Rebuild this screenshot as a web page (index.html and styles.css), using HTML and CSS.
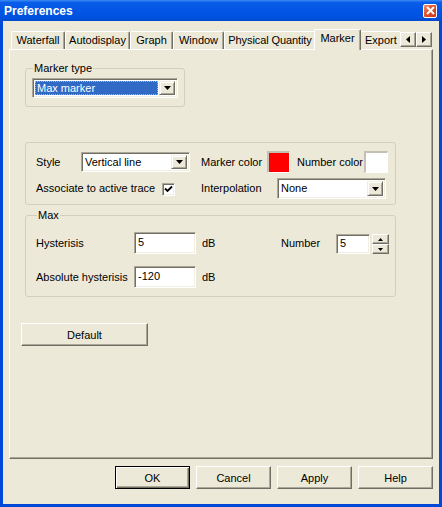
FILE: index.html
```html
<!DOCTYPE html>
<html>
<head>
<meta charset="utf-8">
<title>Preferences</title>
<link rel="stylesheet" href="styles.css">
</head>
<body>
<div class="window">
  <div class="titlebar">
    <span class="title">Preferences</span>
    <span class="close"><svg width="9" height="9" viewBox="0 0 9 9"><path d="M1 1 L8 8 M8 1 L1 8" stroke="#fff" stroke-width="2"/></svg></span>
  </div>
  <div class="frame">
    <div class="tabstrip">
      <div class="tabs">
        <div class="tab t-waterfall">Waterfall</div>
        <div class="tab t-auto">Autodisplay</div>
        <div class="tab t-graph">Graph</div>
        <div class="tab t-window">Window</div>
        <div class="tab t-phys">Physical Quantity</div>
        <div class="tab active t-marker">Marker</div>
        <div class="tab t-export">Export</div>
      </div>
      <div class="scroller">
        <span class="sbtn"><svg width="4" height="7" viewBox="0 0 4 7"><path d="M4 0 L0 3.5 L4 7 Z" fill="#000"/></svg></span>
        <span class="sbtn"><svg width="4" height="7" viewBox="0 0 4 7"><path d="M0 0 L4 3.5 L0 7 Z" fill="#000"/></svg></span>
      </div>
    </div>
    <div class="panel">
      <fieldset class="group g-type">
        <legend>Marker type</legend>
        <div class="combo c-type">
          <span class="combo-text selected"><span class="focus">Max marker</span></span>
          <span class="drop"><svg width="7" height="4" viewBox="0 0 7 4"><path d="M0 0 H7 L3.5 4 Z" fill="#000"/></svg></span>
        </div>
      </fieldset>

      <div class="group g-style">
        <div class="row">
          <span class="lbl w-style">Style</span>
          <div class="combo c-style">
            <span class="combo-text">Vertical line</span>
            <span class="drop"><svg width="7" height="4" viewBox="0 0 7 4"><path d="M0 0 H7 L3.5 4 Z" fill="#000"/></svg></span>
          </div>
          <span class="lbl w-mcolor">Marker color</span>
          <span class="swatch red"></span>
          <span class="lbl w-ncolor">Number color</span>
          <span class="swatch white"></span>
        </div>
        <div class="row row2">
          <span class="lbl w-assoc">Associate to active trace</span>
          <span class="check"><svg width="9" height="9" viewBox="0 0 9 9"><path d="M1 3.5 L3.5 6 L8 1.5" stroke="#000" stroke-width="1.8" fill="none"/></svg></span>
          <span class="lbl w-interp">Interpolation</span>
          <div class="combo c-interp">
            <span class="combo-text">None</span>
            <span class="drop"><svg width="7" height="4" viewBox="0 0 7 4"><path d="M0 0 H7 L3.5 4 Z" fill="#000"/></svg></span>
          </div>
        </div>
      </div>

      <fieldset class="group g-max">
        <legend>Max</legend>
        <div class="row">
          <span class="lbl w-hyst">Hysterisis</span>
          <span class="field f-db">5</span>
          <span class="lbl w-db">dB</span>
          <span class="lbl w-num">Number</span>
          <span class="field f-num">5</span>
          <span class="spin">
            <span class="sp"><svg width="5" height="3" viewBox="0 0 5 3"><path d="M2.5 0 L5 3 H0 Z" fill="#000"/></svg></span>
            <span class="sp"><svg width="5" height="3" viewBox="0 0 5 3"><path d="M0 0 H5 L2.5 3 Z" fill="#000"/></svg></span>
          </span>
        </div>
        <div class="row row-abs">
          <span class="lbl w-hyst">Absolute hysterisis</span>
          <span class="field f-db">-120</span>
          <span class="lbl w-db">dB</span>
        </div>
      </fieldset>

      <button class="btn b-default">Default</button>
    </div>
    <div class="actions">
      <button class="btn b-act b-ok">OK</button>
      <button class="btn b-act">Cancel</button>
      <button class="btn b-act">Apply</button>
      <button class="btn b-act">Help</button>
    </div>
  </div>
</div>
</body>
</html>
```
FILE: styles.css
```css
* { box-sizing: border-box; }
html, body { margin: 0; padding: 0; }
body {
  font-family: "Liberation Sans", Arial, sans-serif;
  font-size: 11px;
  line-height: 13px;
  color: #000;
  background: #ECE9D8;
}
.window {
  width: 442px;
  height: 507px;
  background: #0048D8;
  display: flex;
  flex-direction: column;
  overflow: hidden;
}
.titlebar {
  height: 21px;
  flex: none;
  display: flex;
  align-items: center;
  padding: 0 5px 0 4px;
  background: linear-gradient(#3D8BF7 0%, #0A5DE8 12%, #0055E5 55%, #0052DE 85%, #0048CF 100%);
}
.title {
  color: #fff;
  font-weight: bold;
  font-size: 12px;
  flex: 1;
  padding-top: 1px;
}
.close {
  width: 14px;
  height: 14px;
  border: 1px solid #fff;
  border-radius: 2px;
  background: linear-gradient(135deg, #F09070 0%, #E0502A 45%, #C8381A 100%);
  display: flex;
  align-items: center;
  justify-content: center;
}
.frame {
  flex: 1;
  margin: 0 3px 3px 3px;
  background: #ECE9D8;
  padding: 8px 6px 0 6px;
  display: flex;
  flex-direction: column;
}
.tabstrip {
  height: 21px;
  margin-bottom: -1px;
  display: flex;
  position: relative;
  z-index: 1;
}
.tabs {
  width: 391px;
  height: 21px;
  padding-left: 2px;
  display: flex;
  align-items: flex-start;
  overflow: hidden;
}
.tab {
  flex: none;
  height: 18px;
  margin-top: 2px;
  padding: 2px 0 0 0;
  text-align: center;
  background: #ECE9D8;
  border-top: 1px solid #fff;
  border-left: 1px solid #fff;
  border-right: 1px solid #716F64;
  box-shadow: inset -1px 0 #ACA899;
  border-radius: 2px 2px 0 0;
  white-space: nowrap;
}
.t-waterfall { width: 54px; }
.t-auto { width: 65px; }
.t-graph { width: 43px; }
.t-window { width: 51px; }
.t-phys { width: 92px; letter-spacing: -0.1px; }
.t-export {
  width: 44px;
  text-align: left;
  padding-left: 5px;
}
.tab.active {
  width: 47px;
  height: 21px;
  margin: 0 -2px;
  padding: 2px 0 0 0;
  position: relative;
  z-index: 2;
}
.scroller {
  display: flex;
  margin-top: 3px;
}
.sbtn {
  width: 16px;
  height: 15px;
  background: #ECE9D8;
  border-top: 1px solid #fff;
  border-left: 1px solid #fff;
  border-right: 1px solid #716F64;
  border-bottom: 1px solid #716F64;
  box-shadow: inset -1px -1px #ACA899;
  display: flex;
  align-items: center;
  justify-content: center;
}
.panel {
  height: 410px;
  flex: none;
  border-top: 1px solid #fff;
  border-left: 1px solid #fff;
  border-right: 1px solid #716F64;
  border-bottom: 1px solid #716F64;
  box-shadow: inset -1px -1px #ACA899;
  padding: 12px 0 0 11px;
  display: flex;
  flex-direction: column;
  align-items: flex-start;
}
.group {
  margin: 0 0 0 4px;
  border: 1px solid #D0D0BF;
  border-radius: 3px;
  min-width: 0;
}
fieldset.group legend {
  padding: 0 1px;
  margin-left: 1px;
  line-height: 13px;
}
.g-type {
  width: 160px;
  padding: 3px 5px 8px 6px;
}
.g-style {
  width: 371px;
  margin-top: 35px;
  padding: 8px 0 5px 10px;
}
.g-max {
  width: 371px;
  margin-top: 4px;
  padding: 10px 0 8px 10px;
}
.row {
  display: flex;
  align-items: center;
  height: 22px;
}
.row2 {
  margin-top: 5px;
  height: 21px;
}
.row-abs {
  margin-top: 12px;
}
.lbl { flex: none; white-space: nowrap; }
.w-style { width: 45px; }
.w-mcolor { width: 66px; margin-left: 11px; }
.w-ncolor { width: 67px; margin-left: 7px; }
.w-assoc { width: 126px; }
.w-interp { width: 76px; margin-left: 26px; }
.w-hyst { width: 98px; }
.w-db { width: 79px; margin-left: 6px; }
.w-num { width: 55px; }

.combo {
  flex: none;
  height: 20px;
  display: flex;
  align-items: center;
  background: #fff;
  border-top: 1px solid #ACA899;
  border-left: 1px solid #ACA899;
  border-right: 1px solid #fff;
  border-bottom: 1px solid #fff;
  box-shadow: inset 1px 1px #716F64, inset -1px -1px #F1EFE2;
  padding: 2px 2px 2px 2px;
}
.c-type { width: 146px; }
.c-style { width: 109px; }
.c-interp { width: 109px; height: 21px; }
.combo-text {
  flex: 1;
  height: 100%;
  display: flex;
  align-items: center;
  padding-left: 1px;
  white-space: nowrap;
}
.combo-text.selected {
  background: #316AC5;
  color: #fff;
  padding: 0;
}
.focus {
  width: 100%;
  height: 100%;
  outline: 1px dotted #E8B040;
  outline-offset: -1px;
  display: flex;
  align-items: center;
  padding-left: 2px;
}
.drop {
  flex: none;
  width: 16px;
  height: 100%;
  margin-left: 1px;
  background: #ECE9D8;
  border-top: 1px solid #F1EFE2;
  border-left: 1px solid #F1EFE2;
  border-right: 1px solid #716F64;
  border-bottom: 1px solid #716F64;
  box-shadow: inset 1px 1px #fff, inset -1px -1px #ACA899;
  display: flex;
  align-items: center;
  justify-content: center;
}
.swatch {
  flex: none;
  height: 22px;
  border-top: 2px solid #C4C1B4;
  border-left: 2px solid #C4C1B4;
  border-right: 1px solid #fff;
  border-bottom: 1px solid #fff;
}
.swatch.red { width: 23px; background: #FF0000; }
.swatch.white { width: 24px; background: #fff; }
.check {
  flex: none;
  width: 13px;
  height: 13px;
  background: #fff;
  border-top: 1px solid #ACA899;
  border-left: 1px solid #ACA899;
  border-right: 1px solid #fff;
  border-bottom: 1px solid #fff;
  box-shadow: inset 1px 1px #716F64, inset -1px -1px #F1EFE2;
  display: flex;
  align-items: center;
  justify-content: center;
  margin-top: 1px;
}
.field {
  flex: none;
  background: #fff;
  border-top: 1px solid #ACA899;
  border-left: 1px solid #ACA899;
  border-right: 1px solid #fff;
  border-bottom: 1px solid #fff;
  box-shadow: inset 1px 1px #716F64, inset -1px -1px #F1EFE2;
  padding: 3px 3px 0 3px;
}
.f-db { width: 62px; height: 22px; }
.f-num { width: 34px; height: 20px; margin-top: 2px; padding-top: 2px; }
.spin {
  flex: none;
  margin-left: 2px;
  margin-top: 2px;
  width: 17px;
  height: 20px;
  display: flex;
  flex-direction: column;
}
.sp {
  flex: 1;
  background: #ECE9D8;
  border-top: 1px solid #fff;
  border-left: 1px solid #fff;
  border-right: 1px solid #716F64;
  border-bottom: 1px solid #716F64;
  box-shadow: inset -1px -1px #ACA899;
  display: flex;
  align-items: center;
  justify-content: center;
}
.btn {
  font-family: "Liberation Sans", Arial, sans-serif;
  font-size: 11px;
  color: #000;
  height: 23px;
  padding: 0;
  background: #ECE9D8;
  border-top: 1px solid #fff;
  border-left: 1px solid #fff;
  border-right: 1px solid #716F64;
  border-bottom: 1px solid #716F64;
  box-shadow: inset -1px -1px #ACA899;
  border-radius: 0;
}
.b-default {
  width: 127px;
  margin-top: 26px;
}
.actions {
  display: flex;
  justify-content: flex-end;
  gap: 6px;
  margin-top: 7px;
  padding-right: 0;
}
.b-act { width: 75px; }
.b-ok {
  border: 1px solid #000;
  box-shadow: inset 1px 1px #fff, inset -1px -1px #716F64, inset -2px -2px #ACA899;
}
```
